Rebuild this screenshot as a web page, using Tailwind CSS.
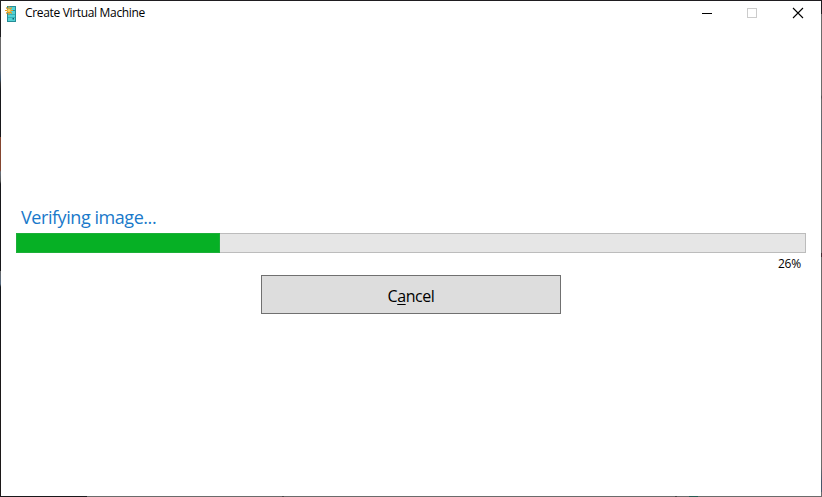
<!DOCTYPE html>
<html lang="en">
<head>
<meta charset="utf-8">
<title>Create Virtual Machine</title>
<script src="https://cdn.jsdelivr.net/npm/@tailwindcss/browser@4"></script>
</head>
<body class="h-[497px] w-[822px] overflow-hidden bg-white font-['Open_Sans','Noto_Sans',sans-serif] text-black">
<div class="grid h-full w-full grid-cols-[1px_820px_1px] grid-rows-[1px_495px_1px]">
  <!-- window frame -->
  <div class="col-span-3 bg-[#1f1d20]"></div>
  <div class="bg-[linear-gradient(to_bottom,#1e1e20_36px,#6a6a6a_36px,#6a6a6a_68px,#35506a_78px,#333_82px,#17171a_90px,#17171a_136px,#84452f_136px,#84452f_169px,#66707a_171px,#555_180px,#17171a_183px,#17171a_270px,#68686a_270px,#556a80_283px,#15171c_286px,#1c1818_396px,#1c1818)]"></div>
  <main class="flex flex-col bg-white">
    <header class="flex h-[25px] items-center">
      <svg class="ml-[4px] h-[18px] w-[14px]" viewBox="0 0 14 18">
        <rect x="2.5" y="1.5" width="8" height="15" fill="#53d2d6" stroke="#258d96"/>
        <path d="M3 9.500h7M3 12.500h7" stroke="#38b0b8"/>
        <path d="M7 5.500h3" stroke="#258d96"/>
        <rect x="7.500" y="13" width="1.500" height="1.500" fill="#12606a"/>
        <path d="M4 1v9M0 5.500h8M1.200 2.500l5.600 6M6.800 2.500l-5.600 6" stroke="#e39a22" stroke-width="1.100"/>
        <circle cx="4" cy="5.500" r="1.600" fill="#ffd35a"/>
      </svg>
      <h1 class="mb-px ml-[6px] w-[560px] whitespace-nowrap text-[12px] leading-[16px] tracking-[-0.33px]">Create Virtual Machine</h1>
      <svg class="ml-auto h-[25px] w-[130px]" viewBox="0 0 130 25" fill="none" shape-rendering="crispEdges">
        <path d="M11 12.500h10" stroke="#000"/>
        <rect x="56.500" y="7.500" width="9" height="9" stroke="#ccc"/>
        <path d="M102 7l10 10M112 7l-10 10" stroke="#000" stroke-width="1.100" shape-rendering="auto"/>
      </svg>
    </header>
    <section class="mt-[179px] flex flex-col px-[15px]">
      <p class="ml-[5px] h-[28px] whitespace-nowrap text-[18px] leading-[25px] tracking-[-0.44px] text-[#1979ca]">Verifying image...</p>
      <div class="flex h-[20px] border border-[#bcbcbc] bg-[#e6e6e6]">
        <div class="-my-px -ml-px w-[204px] border border-[#1caf39] bg-[#06b025]"></div>
      </div>
      <p class="mt-[3px] h-[16px] pr-[5px] text-right text-[12px] leading-[16px] tracking-[-0.2px]">26%</p>
      <button class="mt-[3px] h-[39px] w-[300px] self-center border border-[#707070] bg-[#ddd] pt-[2px] text-[16px] leading-[24px] tracking-[-0.45px]">C<span class="underline decoration-1 underline-offset-2">a</span>ncel</button>
    </section>
  </main>
  <div class="bg-[linear-gradient(to_bottom,#1e1c20_13px,#6b6b6b_13px,#6b6b6b_94px,#4c4c50_96px,#6b6b6b_99px,#5f6972_130px,#5f6972_143px,#6b6b6b_143px,#6b6b6b_252px,#402932_252px,#402932_256px,#6b6b6b_256px,#6b6b6b_465px,#46566a_480px,#46566a_491px,#6b6b6b_491px)]"></div>
  <div class="col-span-3 bg-[linear-gradient(to_right,#19191b_87px,#6b6b6b_87px,#6b6b6b_282px,#484848_282px,#484848_284px,#6b6b6b_284px,#6b6b6b_675px,#444_675px,#444_677px,#6b6b6b_677px,#6b6b6b_689px,#255a50_689px,#255a50_698px,#6b6b6b_698px)]"></div>
</div>
</body>
</html>
